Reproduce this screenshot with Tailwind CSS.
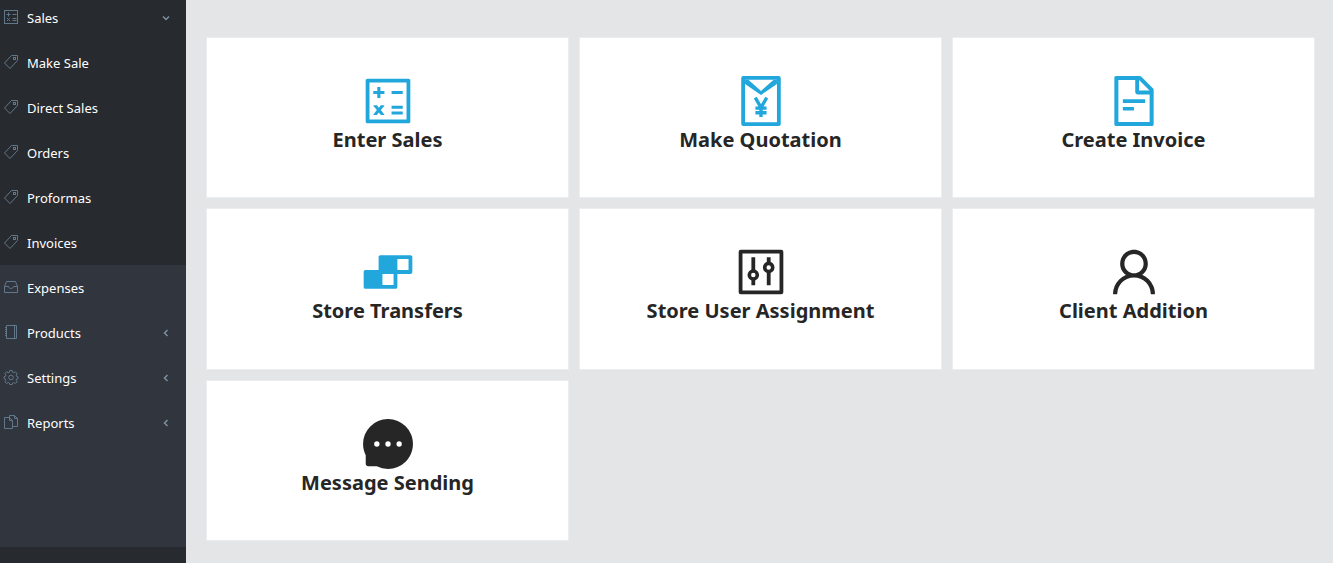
<!DOCTYPE html>
<html lang="en">
<head>
  <meta charset="UTF-8">
  <title>Sales Dashboard</title>
  <meta name="viewport" content="width=device-width, initial-scale=1.0">
  <script src="https://cdn.jsdelivr.net/npm/@tailwindcss/browser@4"></script>
</head>
<body class="flex h-screen overflow-hidden bg-[#e4e5e7] font-['Segoe_UI','Noto_Sans',sans-serif]">

  <!-- Icons shared by several sidebar items -->
  <svg class="hidden">
    <symbol id="tag" viewBox="0 0 16 16">
      <path d="M8.5 1.5h6v5l-7.5 8L1.5 9z" />
      <rect x="10.5" y="3.5" width="2" height="2" />
    </symbol>
    <symbol id="chevron-left" viewBox="0 0 8 8">
      <path d="M5.5 1L2.5 4l3 3" />
    </symbol>
  </svg>

  <!-- Sidebar -->
  <aside class="flex w-[186px] shrink-0 flex-col bg-[#31353d] text-[13px] text-white">
    <nav class="-mt-[5px] flex-1">
      <div class="bg-[#272a2e]">
        <button type="button" aria-expanded="true" class="flex h-[45px] w-full items-center gap-2 pl-[3px] pr-4 text-left">
          <svg class="mb-0.5 size-4 shrink-0 fill-none stroke-[#61788b]" viewBox="0 0 16 16">
            <rect x="1.5" y="1.5" width="13" height="13" />
            <path d="M3.5 5.5h4M5.5 3.5v4M9.5 5.5h4M9.5 9.5h4M9.5 11.5h4M4 9l3 3M7 9l-3 3" />
          </svg>
          <span class="flex-1 pt-0.5">Sales</span>
          <svg class="size-2 fill-none stroke-[#7c91a2] stroke-[1.5]" viewBox="0 0 8 8"><path d="M1 2.5l3 3 3-3" /></svg>
        </button>
        <a href="#" class="flex h-[45px] items-center gap-2 pl-[3px]">
          <svg class="mb-0.5 size-4 fill-none stroke-[#61788b]"><use href="#tag" /></svg>
          <span class="pt-0.5">Make Sale</span>
        </a>
        <a href="#" class="flex h-[45px] items-center gap-2 pl-[3px]">
          <svg class="mb-0.5 size-4 fill-none stroke-[#61788b]"><use href="#tag" /></svg>
          <span class="pt-0.5">Direct Sales</span>
        </a>
        <a href="#" class="flex h-[45px] items-center gap-2 pl-[3px]">
          <svg class="mb-0.5 size-4 fill-none stroke-[#61788b]"><use href="#tag" /></svg>
          <span class="pt-0.5">Orders</span>
        </a>
        <a href="#" class="flex h-[45px] items-center gap-2 pl-[3px]">
          <svg class="mb-0.5 size-4 fill-none stroke-[#61788b]"><use href="#tag" /></svg>
          <span class="pt-0.5">Proformas</span>
        </a>
        <a href="#" class="flex h-[45px] items-center gap-2 pl-[3px]">
          <svg class="mb-0.5 size-4 fill-none stroke-[#61788b]"><use href="#tag" /></svg>
          <span class="pt-0.5">Invoices</span>
        </a>
      </div>

      <a href="#" class="flex h-[45px] items-center gap-2 pl-[3px]">
        <svg class="mb-0.5 size-4 fill-none stroke-[#61788b]" viewBox="0 0 16 16">
          <path d="M3.5 2.5h9l2 5v6h-13v-6zM1.5 7.5h4c.5 1.5 1.3 2 2.5 2s2-.5 2.5-2h4" />
        </svg>
        <span class="pt-0.5">Expenses</span>
      </a>
      <button type="button" aria-expanded="false" class="flex h-[45px] w-full items-center gap-2 pl-[3px] pr-4 text-left">
        <svg class="mb-0.5 size-4 shrink-0 fill-none stroke-[#61788b]" viewBox="0 0 16 16">
          <path d="M3.5 1.5h10v13h-10zM11.500 1.500v13" />
          <path d="M2 3.5h2M2 5.5h2M2 7.5h2M2 9.5h2M2 11.5h2" />
        </svg>
        <span class="flex-1 pt-0.5">Products</span>
        <svg class="size-2 fill-none stroke-[#7c91a2] stroke-[1.5]"><use href="#chevron-left" /></svg>
      </button>
      <button type="button" aria-expanded="false" class="flex h-[45px] w-full items-center gap-2 pl-[3px] pr-4 text-left">
        <svg class="mb-0.5 size-4 shrink-0 fill-none stroke-[#61788b]" viewBox="0 0 16 16">
          <path d="M6.8 1.5h2.4l.4 1.8 1.2.5 1.6-1 1.7 1.7-1 1.6.5 1.2 1.4.4v1.9l-1.4.4-.5 1.2 1 1.6-1.7 1.7-1.6-1-1.2.5-.4 1.5H6.8l-.4-1.5-1.2-.5-1.6 1-1.7-1.7 1-1.6-.5-1.2L1 9.6V7.7l1.4-.4.5-1.2-1-1.6 1.7-1.7 1.6 1 1.2-.5z" />
          <circle cx="8" cy="8.5" r="2.3" />
        </svg>
        <span class="flex-1 pt-0.5">Settings</span>
        <svg class="size-2 fill-none stroke-[#7c91a2] stroke-[1.5]"><use href="#chevron-left" /></svg>
      </button>
      <button type="button" aria-expanded="false" class="flex h-[45px] w-full items-center gap-2 pl-[3px] pr-4 text-left">
        <svg class="mb-0.5 size-4 shrink-0 fill-none stroke-[#61788b]" viewBox="0 0 16 16">
          <path d="M6.5 3.5h-5v11h8v-2M9.5 12.5v-6l-3-3v3h3" />
          <path d="M6.5 3.5v-2h5l3 3v8h-5M11.5 1.5v3h3" />
        </svg>
        <span class="flex-1 pt-0.5">Reports</span>
        <svg class="size-2 fill-none stroke-[#7c91a2] stroke-[1.5]"><use href="#chevron-left" /></svg>
      </button>
    </nav>
    <div class="h-4 bg-[#272a2e]"></div>
  </aside>

  <!-- Shortcut cards -->
  <main class="flex-1 overflow-hidden pt-[37px] pr-[18px] pl-5">
    <div class="grid min-h-[504px] auto-rows-fr grid-cols-3 gap-2.5 text-center text-xl leading-[27px] font-bold text-[#262626]">
      <a href="#" class="flex flex-col items-center border border-[#ebedf0] bg-white pt-[38px]">
        <svg class="size-[50px] fill-[#22a7dc]" viewBox="64 64 896 896">
          <path d="M251.2 387H320v68.8c0 1.8 1.8 3.2 4 3.2h48c2.2 0 4-1.4 4-3.3V387h68.8c1.8 0 3.2-1.8 3.2-4v-48c0-2.2-1.4-4-3.3-4H376v-68.8c0-1.8-1.8-3.2-4-3.2h-48c-2.2 0-4 1.4-4 3.2V331h-68.8c-1.8 0-3.2 1.8-3.2 4v48c0 2.2 1.4 4 3.2 4zM576 331h200v56H576zM576 596h200v56H576zM576 700h200v56H576z" />
          <path d="M383.5 675l61.2-74.9c4.3-5.2.7-13.1-5.9-13.1H388c-2.3 0-4.5 1-5.9 2.9l-34 41.6-34-41.6a7.85 7.85 0 0 0-5.9-2.9h-50.9c-6.6 0-10.2 7.9-5.9 13.1l61.2 74.9-62.7 76.8c-4.4 5.2-.8 13.1 5.8 13.1h50.8c2.3 0 4.5-1 5.9-2.9l35.5-43.5 35.5 43.5c1.5 1.8 3.7 2.9 5.9 2.9h50.8c6.6 0 10.2-7.9 5.9-13.1L383.5 675zM880 112H144c-17.7 0-32 14.3-32 32v736c0 17.7 14.3 32 32 32h736c17.7 0 32-14.3 32-32V144c0-17.7-14.3-32-32-32zm-36 732H180V180h664v664z" />
        </svg>
        <span>Enter Sales</span>
      </a>
      <a href="#" class="flex flex-col items-center border border-[#ebedf0] bg-white pt-[38px]">
        <svg class="size-[50px] fill-[#22a7dc] stroke-[#22a7dc]" viewBox="64 64 896 896">
          <rect x="192" y="98" width="640" height="828" rx="4" fill="none" stroke-width="68" />
          <path d="M226 130h59l227 203 227-203h59v78L512 404 226 208z" stroke="none" />
          <path d="M410 452l102 180 102-180M512 610v190M412 640h200M412 722h200" fill="none" stroke-width="60" />
        </svg>
        <span>Make Quotation</span>
      </a>
      <a href="#" class="flex flex-col items-center border border-[#ebedf0] bg-white pt-[38px]">
        <svg class="size-[50px] fill-[#22a7dc]" viewBox="64 64 896 896">
          <path d="M854.6 288.6L639.4 73.4c-6-6-14.1-9.4-22.6-9.4H192c-17.7 0-32 14.3-32 32v832c0 17.7 14.3 32 32 32h640c17.7 0 32-14.3 32-32V311.3c0-8.5-3.4-16.7-9.4-22.7zM790.2 326H602V137.8L790.2 326zm1.8 562H232V136h302v216a42 42 0 0 0 42 42h216v494zM504 618H320c-4.4 0-8 3.6-8 8v48c0 4.4 3.6 8 8 8h184c4.4 0 8-3.6 8-8v-48c0-4.4-3.6-8-8-8zM312 490v48c0 4.4 3.6 8 8 8h384c4.4 0 8-3.6 8-8v-48c0-4.4-3.6-8-8-8H320c-4.4 0-8 3.6-8 8z" />
        </svg>
        <span>Create Invoice</span>
      </a>
      <a href="#" class="flex flex-col items-center border border-[#ebedf0] bg-white pt-[38px]">
        <svg class="size-[50px] fill-[#22a7dc]" viewBox="64 64 896 896">
          <path d="M916 210H376c-17.7 0-32 14.3-32 32v236H108c-17.7 0-32 14.3-32 32v272c0 17.7 14.3 32 32 32h540c17.7 0 32-14.3 32-32V546h236c17.7 0 32-14.3 32-32V242c0-17.7-14.3-32-32-32zM612 746H412V546h200v200zm268-268H680V278h200v200z" />
        </svg>
        <span>Store Transfers</span>
      </a>
      <a href="#" class="flex flex-col items-center border border-[#ebedf0] bg-white pt-[38px]">
        <svg class="size-[50px] fill-none stroke-[#262626]" viewBox="64 64 896 896">
          <rect x="146" y="146" width="732" height="732" rx="4" stroke-width="68" />
          <path d="M374 248v246M374 638v110M650 248v110M650 502v246" stroke-width="68" />
          <circle cx="374" cy="566" r="72" stroke-width="64" />
          <circle cx="650" cy="430" r="72" stroke-width="64" />
        </svg>
        <span>Store User Assignment</span>
      </a>
      <a href="#" class="flex flex-col items-center border border-[#ebedf0] bg-white pt-[38px]">
        <svg class="size-[50px] fill-[#262626]" viewBox="64 64 896 896">
          <path d="M858.5 763.6a374 374 0 0 0-80.6-119.5 375.63 375.63 0 0 0-119.5-80.6c-.4-.2-.8-.3-1.2-.5C719.5 518 760 444.7 760 362c0-137-111-248-248-248S264 225 264 362c0 82.7 40.5 156 102.8 201.1-.4.2-.8.3-1.2.5-44.8 18.9-85 46-119.5 80.6a375.63 375.63 0 0 0-80.6 119.5A371.7 371.7 0 0 0 136 901.8a8 8 0 0 0 8 8.2h60c4.4 0 7.9-3.5 8-7.8 2-77.2 33-149.5 87.8-204.3 56.7-56.7 132-87.9 212.2-87.9s155.5 31.2 212.2 87.9C779 752.7 810 825 812 902.2c.1 4.4 3.6 7.8 8 7.8h60a8 8 0 0 0 8-8.2c-1-47.8-10.9-94.3-29.5-138.2zM512 534c-45.9 0-89.1-17.9-121.6-50.4S340 407.9 340 362c0-45.9 17.9-89.1 50.4-121.6S466.1 190 512 190s89.1 17.9 121.6 50.4S684 316.1 684 362c0 45.9-17.9 89.1-50.4 121.6S557.9 534 512 534z" />
        </svg>
        <span>Client Addition</span>
      </a>
      <a href="#" class="flex flex-col items-center border border-[#ebedf0] bg-white pt-[38px]">
        <svg class="size-[50px] fill-[#262626]" viewBox="64 64 896 896">
          <path d="M924.3 338.4a447.57 447.57 0 0 0-96.1-143.3 443.09 443.09 0 0 0-143-96.3A443.91 443.91 0 0 0 512 64h-2c-60.5.3-119 12.3-174.1 35.9a444.08 444.08 0 0 0-141.7 96.5 445 445 0 0 0-95 142.8A449.89 449.89 0 0 0 65 514.1c.3 69.4 16.9 138.3 47.9 199.9v152c0 25.4 20.6 46 45.9 46h151.8a447.72 447.72 0 0 0 199.5 48h2.1c59.8 0 117.7-11.6 172.3-34.3A443.2 443.2 0 0 0 827 830.2c41.2-40.9 73.6-88.7 96.3-142 23.5-55.2 35.5-113.9 35.8-174.5.2-60.8-11.6-120-34.8-175.3z" />
          <g class="fill-white">
            <circle cx="312" cy="512" r="48" />
            <circle cx="512" cy="512" r="48" />
            <circle cx="712" cy="512" r="48" />
          </g>
        </svg>
        <span>Message Sending</span>
      </a>
    </div>
  </main>

</body>
</html>
